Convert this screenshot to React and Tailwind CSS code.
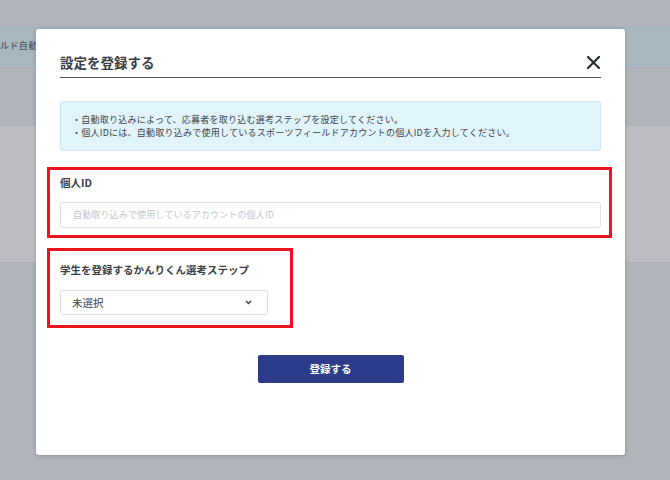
import React from "react";

const font = { fontFamily: '"Noto Sans CJK JP", "Noto Sans", sans-serif' };

export default function App() {
  return (
    <div className="relative w-[670px] h-[480px] overflow-hidden bg-[#b0b3ba]" style={font}>
      {/* background page */}
      <div className="flex flex-col">
        <div className="h-[27px]" />
        <div className="h-[38px] bg-[#a8b6bf] border-y border-[#96b6c8] flex items-center">
          <span className="text-[9px] font-medium text-[#4c5862] tracking-[0.4px] whitespace-nowrap">ルド自動取り込み設定</span>
        </div>
        <div className="h-[61px]" />
        <div className="h-[136px] bg-[#bbbdc2]" />
      </div>

      {/* modal */}
      <div className="absolute left-[36px] top-[29px] w-[589px] h-[426px] bg-white rounded-[3px] shadow-[0_1px_4px_rgba(0,0,0,0.2)] px-[24px] flex flex-col">
        <div className="pt-[23px] pb-[5px] border-b border-[#51555d] flex items-center justify-between">
          <h2 className="text-[13.5px] leading-[20px] font-bold text-[#3a3e46]">設定を登録する</h2>
          <svg width="13" height="13" viewBox="0 0 13 13" className="mr-[1px]">
            <path d="M1 1 L12 12 M12 1 L1 12" stroke="#2a2e35" strokeWidth="2.2" strokeLinecap="square" />
          </svg>
        </div>

        <div className="mt-[23px] bg-[#e1f3fb] border border-[#c4e6f5] rounded-[3px] px-[11px] py-[11px] text-[9px] leading-[13px] text-[#3d444d] tracking-[0.25px]">
          <p>・自動取り込みによって、応募者を取り込む選考ステップを設定してください。</p>
          <p>・個人IDには、自動取り込みで使用しているスポーツフィールドアカウントの個人IDを入力してください。</p>
        </div>

        <div className="mt-[16px] -ml-[13px] -mr-[11px] border-[3px] border-[#e8141f] pl-[10px] pr-[8px] pt-[6px] pb-[7px] flex flex-col">
          <label className="text-[10.5px] leading-[14px] font-bold text-[#3a3e46]">個人ID</label>
          <div className="mt-[12px] h-[26px] border border-[#dfe1e5] rounded-[3px] flex items-center px-[12px]">
            <span className="text-[9px] text-[#c3c6cc] tracking-[0.15px]">自動取り込みで使用しているアカウントの個人ID</span>
          </div>
        </div>

        <div className="mt-[10px] -ml-[13px] self-start border-[3px] border-[#e8141f] pl-[10px] pr-[22px] pt-[12px] pb-[10px] flex flex-col">
          <label className="text-[10.5px] leading-[14px] font-bold text-[#3a3e46]">学生を登録するかんりくん選考ステップ</label>
          <div className="mt-[13px] w-[208px] h-[25px] border border-[#dfe1e5] rounded-[3px] flex items-center justify-between pl-[11px] pr-[15px]">
            <span className="text-[10.5px] text-[#3a3e46]">未選択</span>
            <svg width="7" height="5" viewBox="0 0 7 5">
              <path d="M1 1 L3.5 3.5 L6 1" fill="none" stroke="#3a3e46" strokeWidth="1.3" />
            </svg>
          </div>
        </div>

        <div className="mt-[27px] flex justify-center">
          <button className="w-[146px] h-[28px] bg-[#2d3c8a] rounded-[2px] text-white text-[10.5px] font-bold">登録する</button>
        </div>
      </div>
    </div>
  );
}
